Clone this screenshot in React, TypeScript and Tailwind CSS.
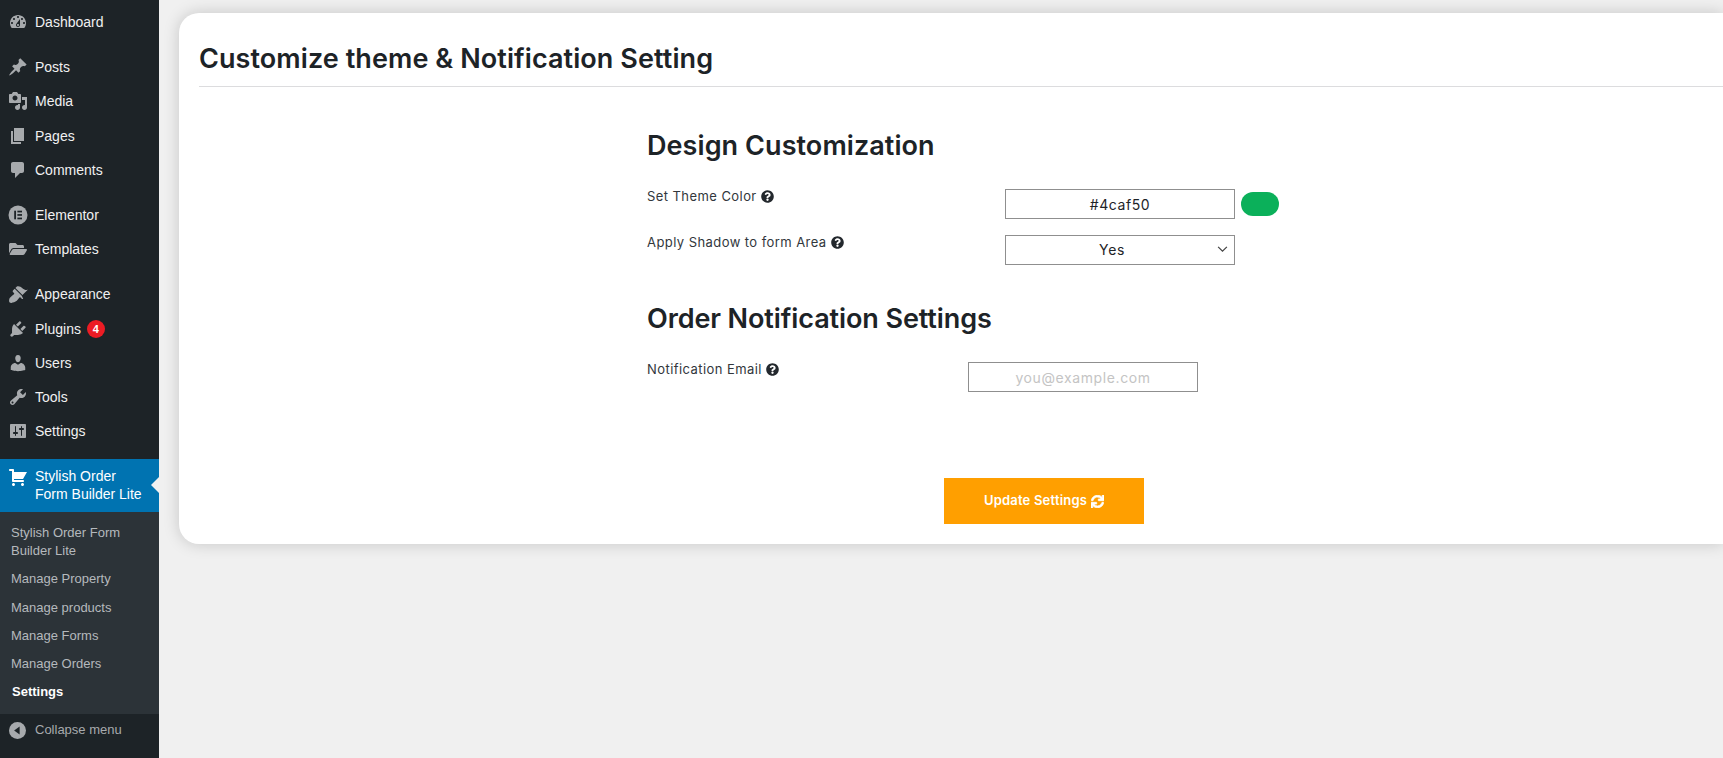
import React from "react";
import { FaFolderOpen, FaQuestionCircle, FaSync } from "react-icons/fa";

const P: Record<string, string> = {
  dashboard: "M3.76 16h12.48c1.1-1.37 1.76-3.11 1.76-5 0-4.42-3.58-8-8-8s-8 3.58-8 8c0 1.89.66 3.63 1.76 5zM10 4c.55 0 1 .45 1 1s-.45 1-1 1-1-.45-1-1 .45-1 1-1zM6 6c.55 0 1 .45 1 1s-.45 1-1 1-1-.45-1-1 .45-1 1-1zm8 0c.55 0 1 .45 1 1s-.45 1-1 1-1-.45-1-1 .45-1 1-1zm-5.37 5.55L12 7v6c0 1.1-.9 2-2 2s-2-.9-2-2c0-.57.24-1.08.63-1.45zM4 10c.55 0 1 .45 1 1s-.45 1-1 1-1-.45-1-1 .45-1 1-1zm12 0c.55 0 1 .45 1 1s-.45 1-1 1-1-.45-1-1 .45-1 1-1zm-5 3c0-.55-.45-1-1-1s-1 .45-1 1 .45 1 1 1 1-.45 1-1z",
  posts: "M10.44 3.02l1.82-1.82 6.36 6.35-1.83 1.82c-1.05-.68-2.48-.57-3.41.36l-.75.75c-.92.93-1.04 2.35-.35 3.41l-1.83 1.82-2.41-2.41-2.8 2.79c-.42.42-3.38 2.71-3.8 2.29s1.86-3.39 2.28-3.81l2.79-2.79L4.1 9.36l1.83-1.82c1.05.69 2.48.57 3.4-.36l.75-.75c.93-.92 1.05-2.35.36-3.41z",
  media: "M13 11V4c0-.55-.45-1-1-1h-1.67L9 1H5L3.67 3H2c-.55 0-1 .45-1 1v7c0 .55.45 1 1 1h10c.55 0 1-.45 1-1zM7 4.5c1.38 0 2.5 1.12 2.5 2.5S8.38 9.5 7 9.5 4.5 8.38 4.5 7 5.62 4.5 7 4.5zM14 6h5v10.5c0 1.38-1.12 2.5-2.5 2.5S14 17.88 14 16.5s1.12-2.5 2.5-2.5c.17 0 .34.02.5.05V9h-3V6zm-4 8.05V13h2v3.5c0 1.38-1.12 2.5-2.5 2.5S7 17.88 7 16.5 8.12 14 9.5 14c.17 0 .34.02.5.05z",
  pages: "M6 15V2h10v13H6zm-1 1h8v2H3V5h2v11z",
  comments: "M5 2h9c1.1 0 2 .9 2 2v7c0 1.1-.9 2-2 2h-2l-5 5v-5H5c-1.1 0-2-.9-2-2V4c0-1.1.9-2 2-2z",
  appearance: "M14.48 11.06L7.41 3.99l1.5-1.5c.5-.56 2.3-.47 3.51.32 1.21.8 1.43 1.28 2.91 2.1 1.18.64 2.45 1.26 4.45.85zm-.71.71L6.7 4.7 4.93 6.47c-.39.39-.39 1.02 0 1.41l1.06 1.06c.39.39.39 1.03 0 1.42-.6.6-1.43 1.11-2.21 1.69-.35.26-.7.53-1.01.84C1.43 13.23.91 15.95 1.1 17.2c.19 1.24 1.12 1.9 2.36 1.7 1.25-.19 3.97-.71 5.31-2.05.31-.31.58-.66.84-1.01.58-.78 1.09-1.61 1.69-2.21.39-.39 1.03-.39 1.42 0l1.06 1.06c.39.39 1.02.39 1.41 0z",
  plugins: "M13.11 4.36L9.87 7.6 8 5.73l3.24-3.24c.35-.34 1.05-.2 1.56.32.52.51.66 1.21.31 1.55zm-8 1.77l.91-1.12 9.01 9.01-1.19.84c-.71.71-2.63 1.16-3.82 1.16H6.14L4.9 17.26c-.59.59-1.54.59-2.12 0-.59-.58-.59-1.53 0-2.12l1.24-1.24v-3.88c0-1.13.4-3.19 1.09-3.89zm7.26 3.97l3.24-3.24c.34-.35 1.04-.21 1.55.31.52.51.66 1.21.31 1.55l-3.24 3.25z",
  users: "M10 9.25c-2.27 0-2.73-3.44-2.73-3.44C7 4.02 7.82 2 9.97 2c2.16 0 2.98 2.02 2.71 3.81 0 0-.41 3.44-2.68 3.44zm0 2.57L12.72 10c2.39 0 4.52 2.33 4.52 4.53v2.49s-3.65 1.13-7.24 1.13c-3.65 0-7.24-1.13-7.24-1.13v-2.49c0-2.25 1.94-4.48 4.47-4.48z",
  tools: "M16.68 9.77c-1.34 1.34-3.3 1.67-4.95.99l-5.41 6.52c-.99.99-2.59.99-3.58 0s-.99-2.59 0-3.57l6.52-5.42c-.68-1.65-.35-3.61.99-4.95 1.28-1.28 3.12-1.62 4.72-1.06l-2.89 2.89 2.82 2.82 2.86-2.87c.53 1.58.18 3.39-1.08 4.67zM3.81 16.21c.4.39 1.04.39 1.43 0 .4-.4.4-1.04 0-1.43-.39-.4-1.03-.4-1.43 0-.39.39-.39 1.03 0 1.43z",
  settings: "M18 16V4c0-.55-.45-1-1-1H3c-.55 0-1 .45-1 1v12c0 .55.45 1 1 1h14c.55 0 1-.45 1-1zM8 11h1c.55 0 1 .45 1 1s-.45 1-1 1H8v1.5c0 .28-.22.5-.5.5s-.5-.22-.5-.5V13H6c-.55 0-1-.45-1-1s.45-1 1-1h1V5.5c0-.28.22-.5.5-.5s.5.22.5.5V11zm5-2h-1c-.55 0-1-.45-1-1s.45-1 1-1h1V5.5c0-.28.22-.5.5-.5s.5.22.5.5V7h1c.55 0 1 .45 1 1s-.45 1-1 1h-1v5.5c0 .28-.22.5-.5.5s-.5-.22-.5-.5V9z",
  cart: "M6 13h9c.55 0 1 .45 1 1s-.45 1-1 1H5c-.55 0-1-.45-1-1V4H2c-.55 0-1-.45-1-1s.45-1 1-1h3c.55 0 1 .45 1 1v2h13l-4 7H6v1zm-.5 3c.83 0 1.5.67 1.5 1.5S6.33 19 5.5 19 4 18.33 4 17.5 4.67 16 5.5 16zm9 0c.83 0 1.5.67 1.5 1.5s-.67 1.5-1.5 1.5-1.5-.67-1.5-1.5.67-1.5 1.5-1.5z",
};

function Dash({ name, className = "text-[#a7aaad]" }: { name: string; className?: string }) {
  return (
    <svg viewBox="0 0 20 20" className={`w-5 h-5 fill-current ${className}`}>
      <path d={P[name]} />
    </svg>
  );
}

function ElementorIcon() {
  return (
    <svg viewBox="0 0 20 20" className="w-5 h-5">
      <circle cx="10" cy="10" r="9.5" fill="#a7aaad" />
      <rect x="6.2" y="5.7" width="1.8" height="8.6" fill="#1d2327" />
      <rect x="9.4" y="5.7" width="4.6" height="1.7" fill="#1d2327" />
      <rect x="9.4" y="9.1" width="4.6" height="1.7" fill="#1d2327" />
      <rect x="9.4" y="12.6" width="4.6" height="1.7" fill="#1d2327" />
    </svg>
  );
}

function Row({ icon, label, badge, tall }: { icon: React.ReactNode; label: string; badge?: string; tall?: boolean }) {
  return (
    <div className={`flex h-[34px] shrink-0 items-center text-[14px] text-[#f0f0f1] ${tall ? "mb-[1px]" : ""}`}>
      <span className="flex w-[35px] shrink-0 justify-center">{icon}</span>
      <span>{label}</span>
      {badge && (
        <span className="ml-[6px] flex h-[18px] w-[18px] items-center justify-center rounded-full bg-[#ec1c24] text-[11px] font-bold text-white">
          {badge}
        </span>
      )}
    </div>
  );
}

function Sep() {
  return <div className="h-[11px] shrink-0" />;
}

function Sidebar() {
  const sub = ["Manage Property", "Manage products", "Manage Forms", "Manage Orders"];
  return (
    <aside className="flex h-[758px] w-[159px] shrink-0 flex-col bg-[#1d2327] pt-[5px] font-['Liberation_Sans',Arial,sans-serif]">
      <Row icon={<Dash name="dashboard" />} label="Dashboard" />
      <Sep />
      <Row icon={<Dash name="posts" />} label="Posts" />
      <Row icon={<Dash name="media" />} label="Media" tall />
      <Row icon={<Dash name="pages" />} label="Pages" />
      <Row icon={<Dash name="comments" />} label="Comments" />
      <Sep />
      <Row icon={<ElementorIcon />} label="Elementor" />
      <Row icon={<FaFolderOpen className="h-[18px] w-[18px] text-[#a7aaad]" />} label="Templates" />
      <Sep />
      <Row icon={<Dash name="appearance" />} label="Appearance" tall />
      <Row icon={<Dash name="plugins" />} label="Plugins" badge="4" />
      <Row icon={<Dash name="users" />} label="Users" />
      <Row icon={<Dash name="tools" />} label="Tools" />
      <Row icon={<Dash name="settings" />} label="Settings" />
      <Sep />
      <div className="relative flex h-[53px] shrink-0 bg-[#0073b1] pt-[8px] text-[14px] leading-[18px] text-white">
        <span className="flex w-[35px] shrink-0 justify-center">
          <Dash name="cart" className="text-white" />
        </span>
        <span className="w-[110px]">Stylish Order Form Builder Lite</span>
        <span className="absolute right-0 top-[18px] h-0 w-0 border-y-[8px] border-r-[8px] border-y-transparent border-r-[#f0f0f0]" />
      </div>
      <div className="flex h-[202px] shrink-0 flex-col bg-[#2c3338] pt-[12px] text-[13px] text-[#b5b9bd]">
        <div className="pl-[11px] leading-[18px]">
          Stylish Order Form
          <br />
          Builder Lite
        </div>
        {sub.map((s) => (
          <div key={s} className="mt-[10.3px] pl-[11px] leading-[18px]">
            {s}
          </div>
        ))}
        <div className="mt-[10.3px] pl-[12px] font-bold leading-[18px] text-white">Settings</div>
      </div>
      <div className="flex h-[34px] shrink-0 items-center text-[13px] text-[#a7aaad]">
        <span className="-mt-[1px] flex w-[35px] shrink-0 justify-center">
          <svg viewBox="0 0 20 20" className="h-[17px] w-[17px]">
            <circle cx="10" cy="10" r="10" fill="#a7aaad" />
            <path d="M12.5 5.2v9.6L6 10z" fill="#1d2327" />
          </svg>
        </span>
        <span className="-mt-[3px]">Collapse menu</span>
      </div>
    </aside>
  );
}

function Help() {
  return <FaQuestionCircle className="ml-[4px] inline h-[13px] w-[13px] align-[-2px] text-[#23282d]" />;
}

const boxCls =
  "h-[30px] w-[230px] border border-[#8f8f8f] bg-white text-center text-[14px] tracking-[0.6px] text-[#1d2327] outline-none";

const labelCls = "-mt-[1px] text-[13px] leading-[16px] tracking-[0.43px] text-[#32373c]";
const h2Cls = "text-[27px] font-semibold leading-[34px] text-[#1d2327]";

function Main() {
  return (
    <main className="min-w-0 flex-1 pl-[20px] pt-[13px] font-['Inter',sans-serif]">
      <div className="h-[531px] rounded-l-[20px] bg-white pl-[20px] shadow-[0_0_16px_rgba(0,0,0,0.18)]">
        <div className="flex h-[74px] items-end border-b border-[#dcdcde] pb-[10px]">
          <h1 className="text-[27px] font-semibold leading-[34px] tracking-[0.08px] text-[#1d2327]">
            Customize theme &amp; Notification Setting
          </h1>
        </div>
        <div className="pl-[448px]">
          <h2 className={`mt-[42px] ${h2Cls} tracking-[0.07px]`}>Design Customization</h2>
          <div className="mt-[26px] flex">
            <label className={`w-[358px] ${labelCls}`}>
              Set Theme Color
              <Help />
            </label>
            <input readOnly value="#4caf50" className={boxCls} />
            <span className="ml-[6px] mt-[3px] h-[24px] w-[38px] rounded-[12px] bg-[#0bb05a]" />
          </div>
          <div className="mt-[16px] flex">
            <label className={`w-[358px] ${labelCls}`}>
              Apply Shadow to form Area
              <Help />
            </label>
            <div className="relative">
              <select defaultValue="Yes" className={`${boxCls} appearance-none pb-[1px] pr-[16px]`}>
                <option>Yes</option>
                <option>No</option>
              </select>
              <svg viewBox="0 0 12 8" className="pointer-events-none absolute right-[7px] top-[11px] h-[7px] w-[11px] fill-none stroke-[#444] stroke-[1.4]">
                <path d="M1 1l5 5 5-5" />
              </svg>
            </div>
          </div>
          <h2 className={`mt-[37px] ${h2Cls} tracking-[-0.1px]`}>Order Notification Settings</h2>
          <div className="mt-[26px] flex">
            <label className={`w-[321px] ${labelCls}`}>
              Notification Email
              <Help />
            </label>
            <input
              placeholder="you@example.com"
              className={`${boxCls} placeholder:text-[#c4c4c4]`}
            />
          </div>
          <button className="ml-[297px] mt-[86px] flex h-[46px] w-[200px] items-center justify-center bg-[#ff9f00] text-[13px] font-semibold tracking-[0.2px] text-white">
            Update Settings
            <FaSync className="ml-[4px] h-[13px] w-[13px] stroke-current stroke-[30]" />
          </button>
        </div>
      </div>
    </main>
  );
}

export default function App() {
  return (
    <div className="flex h-[758px] w-full overflow-hidden bg-[#f0f0f0]">
      <Sidebar />
      <Main />
    </div>
  );
}
